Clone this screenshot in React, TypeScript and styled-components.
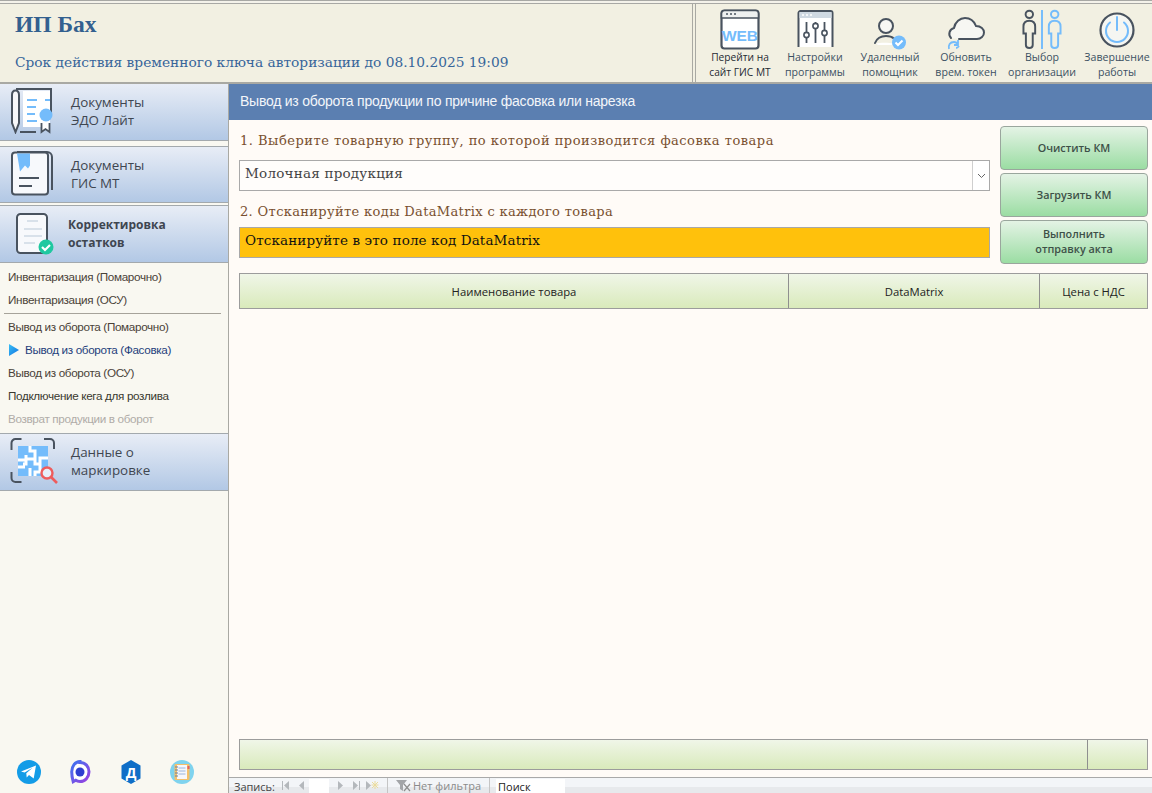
import React from "react";
import styled, { createGlobalStyle } from "styled-components";

const Global = createGlobalStyle`
  html, body { margin: 0; padding: 0; height: 100%; overflow: hidden; background: #fffbf7; }
  #root { width: 1152px; height: 793px; }
  * { box-sizing: border-box; }
`;

const SERIF = `"DejaVu Serif", "Liberation Serif", serif`;
const SANS = `"Open Sans", "Noto Sans", sans-serif`;
const ARIAL = `"Liberation Sans", Arial, sans-serif`;

const Page = styled.div`
  width: 1152px; height: 793px; display: flex; flex-direction: column; overflow: hidden;
  background: #fffbf7; font-family: ${SANS};
`;
const TopLines = styled.div`
  height: 4px; flex: none; background: #f4f2ea;
  border-top: 1px solid #a8a8a4; border-bottom: 1px solid #a8a8a4;
`;
const Header = styled.header`
  height: 80px; flex: none; display: flex; background: #f2f0e2; border-bottom: 2px solid #a9a9a3;
`;
const Brand = styled.div`
  width: 693px; flex: none; padding: 7px 0 0 15px; border-right: 1px solid #a9a9a3;
`;
const BrandName = styled.div`
  font-family: "Liberation Serif", serif; font-weight: 700; font-size: 23.5px; line-height: 26px; color: #33608f;
`;
const BrandNote = styled.div`
  margin-top: 15px; font-family: ${SERIF}; font-size: 13.75px; line-height: 20px; color: #37659a;
`;
const Tools = styled.div`
  margin-left: 2px; flex: 1; display: flex; border-left: 1px solid #a9a9a3; padding-left: 7px; min-width: 0;
`;
const Tool = styled.div<{ $w: number }>`
  width: ${(p) => p.$w}px; flex: none; display: flex; flex-direction: column; align-items: center;
  white-space: nowrap;
`;
const ToolIcon = styled.div<{ $pb: number }>`
  height: 46px; width: 100%; display: flex; align-items: flex-end; justify-content: center; flex: none;
  padding-bottom: ${(p) => p.$pb}px;
`;
const ToolText = styled.div<{ $c?: string; $fs?: number }>`
  font-family: ${SANS}; font-size: ${(p) => p.$fs || 10.6}px; line-height: 14.5px; text-align: center;
  color: ${(p) => p.$c || "#3c5063"};
`;
const Body = styled.div`
  flex: 1; display: flex; min-height: 0;
`;
const Side = styled.aside`
  width: 229px; flex: none; display: flex; flex-direction: column; background: #f9f8f1; border-right: 1px solid #a9a9a3;
`;
const Section = styled.div<{ $mt?: number; $h: number; $top?: boolean; $pb?: number }>`
  height: ${(p) => p.$h}px; flex: none; margin-top: ${(p) => p.$mt || 0}px; display: flex; align-items: center;
  background: linear-gradient(#e8edf6, #b2c8e5); border-bottom: 1px solid #a3a9ad;
  border-top: ${(p) => (p.$top ? "1px solid #a3a9ad" : "0")};
  padding-bottom: ${(p) => p.$pb || 0}px;
`;
const SectionIcon = styled.div<{ $w: number; $pl: number }>`
  width: ${(p) => p.$w}px; flex: none; display: flex; justify-content: flex-start; padding-left: ${(p) => p.$pl}px;
`;
const SectionText = styled.div<{ $b?: boolean }>`
  font-family: ${SANS}; line-height: 18px; color: #3f4650; font-weight: ${(p) => (p.$b ? 700 : 400)};
  font-size: ${(p) => (p.$b ? "12px" : "13.4px")};
`;
const SideList = styled.div`
  height: 171px; flex: none; padding-top: 2px; border-bottom: 1px solid #a3a9ad;
`;
const SideItem = styled.div<{ $c?: string }>`
  height: 23px; padding-left: 8px; display: flex; align-items: center; gap: 5px;
  font-family: ${ARIAL}; font-size: 11.7px; letter-spacing: -0.34px; color: ${(p) => p.$c || "#4a4238"};
`;
const SideRule = styled.div`
  height: 1px; margin: 2px 7px 1px 4px; background: #a6a39a;
`;
const Socials = styled.div`
  margin-top: auto; height: 33px; padding: 0 0 0 17px; display: flex; gap: 27px; flex: none;
`;
const Main = styled.main`
  flex: 1; min-width: 0; display: flex; flex-direction: column;
`;
const TitleBar = styled.div`
  height: 36px; flex: none; background: #5b7fb1; color: #f3f6fa; padding: 0 0 2px 11px;
  display: flex; align-items: center; font-family: ${ARIAL}; font-size: 14px; letter-spacing: -0.24px;
`;
const Work = styled.div`
  flex: none; padding: 6px 4px 0 10px; display: flex; gap: 10px; height: 153px;
`;
const Form = styled.div`
  width: 751px; flex: none; display: flex; flex-direction: column;
`;
const Label = styled.div<{ $mt: number; $ls: number }>`
  margin-top: ${(p) => p.$mt}px; font-family: ${SERIF}; font-size: 13px; line-height: 18px; color: #79502f;
  padding-left: 1px; letter-spacing: ${(p) => p.$ls}px;
`;
const Select = styled.div`
  margin-top: 10px; height: 31px; flex: none; display: flex; align-items: center; justify-content: space-between;
  background: #fffdfb; border: 1px solid #a9a9a9; padding-left: 5px;
  font-family: ${SERIF}; font-size: 13.5px; color: #444; letter-spacing: 0.22px;
`;
const SelectText = styled.span`
  margin-top: -5px;
`;
const Chevron = styled.div`
  width: 17px; height: 29px; display: flex; align-items: center; justify-content: center;
  border-left: 1px solid #cfcfcf; background: #fff;
`;
const Scan = styled.div`
  margin-top: 6px; height: 31px; flex: none; display: flex; align-items: center; background: #ffc10c;
  border: 1px solid #a8a8a8; padding: 0 0 5px 5px; font-family: ${SERIF}; font-size: 13.5px; color: #111; letter-spacing: 0.12px;
`;
const Actions = styled.div`
  width: 148px; flex: none; display: flex; flex-direction: column; gap: 3px;
`;
const Action = styled.button`
  height: 44px; border: 1px solid #9aa69d; border-radius: 4px; background: linear-gradient(#e4f3e5, #9bdda3);
  font-family: ${SANS}; font-size: 10.8px; font-weight: 600; line-height: 15px; color: #3d5048; padding: 0 0 2px; text-align: center;
`;
const Grid = styled.div<{ $cols: string; $h: number }>`
  margin: 0 4px 0 10px; height: ${(p) => p.$h}px; flex: none; display: grid;
  grid-template-columns: ${(p) => p.$cols}; border: 1px solid #9c9c9c; background: linear-gradient(#f0f6e8, #d9eabb);
`;
const Cell = styled.div`
  display: flex; align-items: center; justify-content: center; border-right: 1px solid #8f8f8f;
  font-family: ${SANS}; font-size: 11.3px; color: #222;
  &:last-child { border-right: 0; }
`;
const Filler = styled.div`
  flex: 1; min-height: 0;
`;
const Status = styled.div`
  margin-top: 7px; height: 16px; flex: none; display: flex; align-items: stretch; border-top: 1px solid #a9a9a9;
  background: linear-gradient(#f3f5f8 0 9px, #e7e9ec 9px); font-family: ${SANS}; font-size: 11px; color: #444;
  white-space: nowrap;
`;
const StatusLabel = styled.div`
  padding-left: 5px; width: 48px; line-height: 17px; flex: none;
`;
const NavBtn = styled.div<{ $w?: number }>`
  width: ${(p) => p.$w || 16}px; flex: none; display: flex; align-items: center; justify-content: center;
`;
const RecordBox = styled.div`
  width: 20px; flex: none; background: #fff; margin: 1px 3px 0 0;
`;
const FilterBox = styled.div`
  margin-left: 7px; width: 103px; flex: none; display: flex; align-items: center; gap: 2px; padding-left: 8px; color: #8a8a8a;
  border-left: 1px solid #c5c5c5; border-right: 1px solid #c5c5c5; line-height: 15px;
`;
const SearchBox = styled.div`
  margin: 1px 0 0 6px; width: 69px; flex: none; background: #fff; padding-left: 2px; color: #222; line-height: 15px;
`;

const D = "#49535f";
const B = "#74bcfb";

const WebIcon = () => (
  <svg width="40" height="41" viewBox="0 0 40 41" fill="none">
    <rect x="1.5" y="1.5" width="37" height="38" rx="3" fill="#fff" stroke={D} strokeWidth="2.2" />
    <path d="M1.5 4.5a3 3 0 0 1 3-3h31a3 3 0 0 1 3 3V9h-37z" fill="#eef0f0" stroke={D} strokeWidth="1.6" />
    <path d="M6 5h2M10 5h2M14 5h2" stroke={D} strokeWidth="1.4" />
    <text x="20" y="32" textAnchor="middle" fontFamily="Liberation Sans, sans-serif" fontWeight="700" fontSize="15.5" fill={B}>WEB</text>
  </svg>
);
const SettingsIcon = () => (
  <svg width="37" height="38" viewBox="0 0 37 38" fill="none">
    <path d="M1.5 37V3a2 2 0 0 1 2-2h30a2 2 0 0 1 2 2v34" fill="#fff" stroke={D} strokeWidth="2" />
    <rect x="2.5" y="2" width="32" height="6" fill="#cfd9e2" />
    <path d="M5 5h2M9 5h2M13 5h2" stroke="#fff" strokeWidth="1.5" />
    <path d="M9.5 12v21M18.5 12v21M27.5 12v21" stroke={D} strokeWidth="1.8" />
    <circle cx="9.5" cy="25" r="2.6" fill="#fff" stroke={D} strokeWidth="1.6" />
    <circle cx="18.5" cy="16" r="2.6" fill="#fff" stroke={D} strokeWidth="1.6" />
    <circle cx="27.5" cy="23" r="2.6" fill="#fff" stroke={D} strokeWidth="1.6" />
  </svg>
);
const HelperIcon = () => (
  <svg width="34" height="33" viewBox="0 0 34 33" fill="none">
    <circle cx="13" cy="9" r="7" fill="#f7f7f4" stroke={D} strokeWidth="2" />
    <path d="M2 26c2-5 6-7 11-7 3 0 6 .8 8 2.5" stroke={D} strokeWidth="2" strokeLinecap="round" />
    <path d="M3 26.5c3-1 14-1 17 0l-1 1.5H5z" fill="#fff" />
    <circle cx="26" cy="25.5" r="7" fill={B} />
    <path d="M22.5 25.5l2.5 2.5 4.500-4.500" stroke="#fff" strokeWidth="2" />
  </svg>
);
const CloudIcon = () => (
  <svg width="38" height="33" viewBox="0 0 38 33" fill="none">
    <path d="M4 21a6 6 0 0 1 3-10c1-6 6-10 11-10 5 0 9 3 11 8 5 0 8 3 8 6.5S34 22 30 22H12" stroke={D} strokeWidth="2" fill="#f7f7f3" strokeLinecap="round" />
    <path d="M2 32c-1-4 1-7 5-7 2 0 3 1 4 2M11 23v5H7M9 31c1 0 2-.5 3-2" stroke={B} strokeWidth="1.8" fill="none" />
  </svg>
);
const OrgIcon = () => (
  <svg width="42" height="41" viewBox="0 0 42 42" fill="none">
    <circle cx="8" cy="5.5" r="3.8" stroke={D} strokeWidth="2" />
    <path d="M2 18c0-4 2-6 6-6s6 2 6 6v7h-2.500v12c0 2-1.500 3-3.500 3s-3.500-1-3.500-3V25H2z" stroke={D} strokeWidth="2" />
    <path d="M21 1v40" stroke={B} strokeWidth="2" />
    <circle cx="34" cy="5.5" r="3.8" stroke={B} strokeWidth="2" />
    <path d="M28 18c0-4 2-6 6-6s6 2 6 6v7h-2.500v12c0 2-1.500 3-3.500 3s-3.500-1-3.500-3V25H28z" stroke={B} strokeWidth="2" />
  </svg>
);
const PowerIcon = () => (
  <svg width="36" height="36" viewBox="0 0 36 36" fill="none">
    <circle cx="18" cy="18" r="16.5" fill="#f5f6f2" stroke={D} strokeWidth="2.2" />
    <path d="M11 10.5a11 11 0 1 0 14 0" stroke={B} strokeWidth="2" strokeLinecap="round" />
    <path d="M18 5v13" stroke={B} strokeWidth="2" strokeLinecap="round" />
  </svg>
);
const EdoIcon = () => (
  <svg width="44" height="46" viewBox="0 0 44 46" fill="none">
    <path d="M2 7c0-6 7-6 7 0v28l-3.500 9L2 35z" fill="#f7f8fa" stroke={D} strokeWidth="2" />
    <path d="M6 1h35v26" stroke={D} strokeWidth="2" />
    <path d="M10 44h16" stroke={D} strokeWidth="2" />
    <path d="M13 39V3h27v36" fill="#fff" />
    <path d="M35 12h5M17 12h10M17 19h9M17 26h8M17 33h10" stroke={B} strokeWidth="2" />
    <circle cx="36" cy="27" r="6.5" fill={B} />
    <path d="M31.5 35v9l4-3 4 3v-9" fill="#fff" stroke={D} strokeWidth="1.8" />
  </svg>
);
const GisIcon = () => (
  <svg width="42" height="45" viewBox="0 0 42 45" fill="none">
    <path d="M6 1h30a5 5 0 0 1 5 5v33" stroke={D} strokeWidth="2" />
    <rect x="1" y="1.5" width="36" height="42" rx="3" fill="#f7f9fc" stroke={D} strokeWidth="2" />
    <path d="M6 2.5h13v12l-2 3-3-3-5 6-2-12z" fill={B} />
    <path d="M8 27h20M8 35h13" stroke={D} strokeWidth="2.2" />
  </svg>
);
const CorrectIcon = () => (
  <svg width="38" height="42" viewBox="0 0 38 42" fill="none">
    <rect x="1" y="1" width="30" height="39" rx="3.5" fill="#f7f9fc" stroke={D} strokeWidth="2" />
    <path d="M11 8h11M8 16h18M8 23h18M8 30h11" stroke="#d8e1ea" strokeWidth="2" />
    <circle cx="30" cy="34" r="7.5" fill="#1fc8a0" />
    <path d="M26 34l3 3 5-5" stroke="#fff" strokeWidth="2.2" />
  </svg>
);
const MarkIcon = () => (
  <svg width="50" height="47" viewBox="0 0 50 47" fill="none">
    <path d="M1.5 12V5a4 4 0 0 1 4-4h6M34 1h6a4 4 0 0 1 4 4v6M1.5 34v6a4 4 0 0 0 4 4h6" stroke={D} strokeWidth="2" />
    <rect x="8" y="8" width="30" height="30" fill={B} />
    <path d="M20 8v5h5v8h-9v-4M8 22h8M16 22v4h-3M25 21v5h5M30 26v8h-5v4M38 20h-8v6M20 30v8M8 29h7" stroke="#fff" strokeWidth="3" />
    <circle cx="37" cy="35" r="5.5" fill="#e6eef8" stroke="#ee5c5c" strokeWidth="2.4" />
    <path d="M41 39l6 6" stroke="#ee5c5c" strokeWidth="2.6" />
  </svg>
);

const Telegram = () => (
  <svg width="24" height="24" viewBox="0 0 24 24">
    <circle cx="12" cy="12" r="12" fill="#139ce7" />
    <path d="M4 11.5 19 5.5l-2.300 13-4.700-3.500-2.300 2.500-.4-4.300 6.300-5.500-8 4.800z" fill="#fff" />
  </svg>
);
const Max = () => (
  <svg width="24" height="24" viewBox="0 0 24 24" fill="none">
    <defs>
      <linearGradient id="mx" x1="0" y1="0" x2="1" y2="1">
        <stop offset="0" stopColor="#3b74f0" />
        <stop offset="1" stopColor="#9b3fe0" />
      </linearGradient>
    </defs>
    <path d="M12 2.5c5.400 0 9 3.900 9 9.300 0 5.300-3.800 9.700-9 9.700-2 0-3.300-.5-4.300-1.300l-2.500 1.500c-.8-3-1.500-6-1.500-9.900 0-5.400 3.400-10.300 8.300-10.300z" fill="#fff" stroke="url(#mx)" strokeWidth="3" />
    <circle cx="12" cy="12" r="4.5" fill="#2f3fd0" />
  </svg>
);
const Dion = () => (
  <svg width="24" height="24" viewBox="0 0 24 24">
    <path d="M12 0l9.500 5.500v13L12 24l-9.500-5.500v-13z" fill="#0f6ec7" />
    <text x="12" y="17.5" textAnchor="middle" fontFamily="Liberation Sans, sans-serif" fontWeight="700" fontSize="15" fill="#fff">Д</text>
  </svg>
);
const Notebook = () => (
  <svg width="24" height="24" viewBox="0 0 24 24">
    <circle cx="12" cy="12" r="12" fill="#7fd3ee" />
    <rect x="4.5" y="4" width="15" height="16" rx="1" fill="#f4c06a" />
    <rect x="7" y="5" width="10" height="14" fill="#f7f7fb" />
    <path d="M8.5 8h7M8.5 11h7M8.5 14h7" stroke="#9ab6dc" strokeWidth="1" />
    <path d="M5 7h3M5 10h3M5 13h3M5 16h3" stroke="#6a7fa0" strokeWidth="1" />
    <path d="M17.5 6h2v3h-2z" fill="#e85d5d" />
  </svg>
);
const ActiveArrow = () => (
  <svg width="12" height="14" viewBox="0 0 12 14">
    <defs>
      <linearGradient id="ar" x1="0" y1="0" x2="1" y2="1">
        <stop offset="0" stopColor="#39c0f5" />
        <stop offset="1" stopColor="#1070e0" />
      </linearGradient>
    </defs>
    <path d="M1 1l10 6-10 6z" fill="url(#ar)" />
  </svg>
);
const Nav = ({ d, w }: { d: string; w?: number }) => (
  <NavBtn $w={w}>
    <svg width="9" height="9" viewBox="0 0 9 9" fill="#b4b8bc"><path d={d} /></svg>
  </NavBtn>
);
const NewRecord = () => (
  <NavBtn>
    <svg width="14" height="9" viewBox="0 0 14 9">
      <path d="M1 0v9l5-4.500z" fill="#b4b8bc" />
      <path d="M7 1l6 6M13 1l-6 6M10 0v8M6.5 4h7" stroke="#eadb9c" strokeWidth="1" />
    </svg>
  </NavBtn>
);

const tools = [
  { icon: <WebIcon />, pb: 0, w: 74, a: "Перейти на", b: "сайт ГИС МТ", c: "#1f2a33", fs: 10.2 },
  { icon: <SettingsIcon />, pb: 2, w: 76, a: "Настройки", b: "программы" },
  { icon: <HelperIcon />, pb: 0, w: 74, a: "Удаленный", b: "помощник" },
  { icon: <CloudIcon />, pb: 0, w: 78, a: "Обновить", b: "врем. токен" },
  { icon: <OrgIcon />, pb: 0, w: 74, a: "Выбор", b: "организации" },
  { icon: <PowerIcon />, pb: 2, w: 76, a: "Завершение", b: "работы" },
];

export default function App() {
  return (
    <Page>
      <Global />
      <TopLines />
      <Header>
        <Brand>
          <BrandName>ИП Бах</BrandName>
          <BrandNote>Срок действия временного ключа авторизации до 08.10.2025 19:09</BrandNote>
        </Brand>
        <Tools>
          {tools.map((t) => (
            <Tool key={t.a} $w={t.w}>
              <ToolIcon $pb={t.pb}>{t.icon}</ToolIcon>
              <ToolText $c={t.c} $fs={t.fs}>{t.a}<br />{t.b}</ToolText>
            </Tool>
          ))}
        </Tools>
      </Header>
      <Body>
        <Side>
          <Section $h={57} $pb={2}>
            <SectionIcon $w={71} $pl={10}><EdoIcon /></SectionIcon>
            <SectionText>Документы<br />ЭДО Лайт</SectionText>
          </Section>
          <Section $mt={5} $h={57} $top $pb={2}>
            <SectionIcon $w={71} $pl={11}><GisIcon /></SectionIcon>
            <SectionText>Документы<br />ГИС МТ</SectionText>
          </Section>
          <Section $mt={2} $h={58} $top>
            <SectionIcon $w={68} $pl={16}><CorrectIcon /></SectionIcon>
            <SectionText $b>Корректировка<br />остатков</SectionText>
          </Section>
          <SideList>
            <SideItem>Инвентаризация (Помарочно)</SideItem>
            <SideItem>Инвентаризация (ОСУ)</SideItem>
            <SideRule />
            <SideItem>Вывод из оборота (Помарочно)</SideItem>
            <SideItem $c="#1f3f7c"><ActiveArrow />Вывод из оборота (Фасовка)</SideItem>
            <SideItem>Вывод из оборота (ОСУ)</SideItem>
            <SideItem $c="#3a3a30">Подключение кега для розлива</SideItem>
            <SideItem $c="#b0aca8">Возврат продукции в оборот</SideItem>
          </SideList>
          <Section $h={57} $pb={2}>
            <SectionIcon $w={71} $pl={10}><MarkIcon /></SectionIcon>
            <SectionText>Данные о<br />маркировке</SectionText>
          </Section>
          <Socials>
            <Telegram />
            <Max />
            <Dion />
            <Notebook />
          </Socials>
        </Side>
        <Main>
          <TitleBar>Вывод из оборота продукции по причине фасовка или нарезка</TitleBar>
          <Work>
            <Form>
              <Label $mt={6} $ls={0.5}>1. Выберите товарную группу, по которой производится фасовка товара</Label>
              <Select>
                <SelectText>Молочная продукция</SelectText>
                <Chevron>
                  <svg width="9" height="6" viewBox="0 0 9 6" fill="none"><path d="M1 1l3.500 3.500L8 1" stroke="#666" /></svg>
                </Chevron>
              </Select>
              <Label $mt={12} $ls={0.35}>2. Отсканируйте коды DataMatrix с каждого товара</Label>
              <Scan>Отсканируйте в это поле код DataMatrix</Scan>
            </Form>
            <Actions>
              <Action>Очистить КМ</Action>
              <Action>Загрузить КМ</Action>
              <Action>Выполнить<br />отправку акта</Action>
            </Actions>
          </Work>
          <Grid $cols="549px 251px 1fr" $h={36}>
            <Cell>Наименование товара</Cell>
            <Cell>DataMatrix</Cell>
            <Cell>Цена с НДС</Cell>
          </Grid>
          <Filler />
          <Grid $cols="848px 1fr" $h={31}>
            <Cell />
            <Cell />
          </Grid>
          <Status>
            <StatusLabel>Запись:</StatusLabel>
            <Nav d="M1 0h1v9H1zM8 0v9L3 4.500z" />
            <Nav d="M7 0v9L2 4.500z" />
            <RecordBox />
            <Nav d="M2 0v9l5-4.500z" />
            <Nav d="M1 0v9l5-4.500zM7 0h1v9H7z" />
            <NewRecord />
            <FilterBox>
              <svg width="15" height="13" viewBox="0 0 15 13"><path d="M0 1h11L7 6v6L4 10V6z" fill="#a3a5a8" /><path d="M8 5l6 7M14 5l-6 7" stroke="#8e8e8e" strokeWidth="1.2" /></svg>
              Нет фильтра
            </FilterBox>
            <SearchBox>Поиск</SearchBox>
          </Status>
        </Main>
      </Body>
    </Page>
  );
}
